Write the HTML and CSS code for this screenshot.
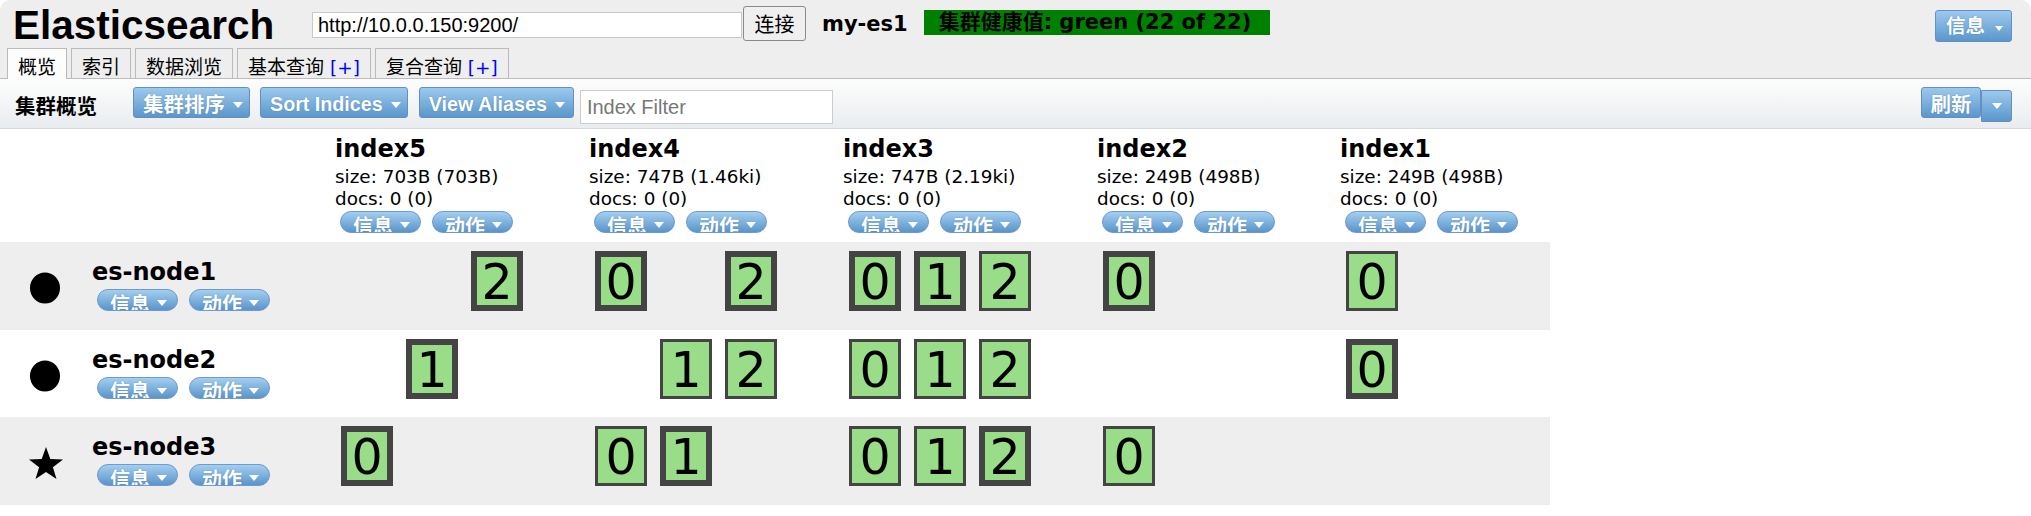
FILE: index.html
```html
<!DOCTYPE html>
<html lang="zh-CN">
<head>
<meta charset="utf-8">
<title>Elasticsearch</title>
<link rel="stylesheet" href="styles.css">
</head>
<body>
<div class="app">
  <header class="header">
    <div class="header-top">
      <h1 class="logo">Elasticsearch</h1>
      <input class="url" type="text" value="http://10.0.0.150:9200/">
      <button class="connect" type="button">连接</button>
      <span class="cluster-name">my-es1</span>
      <span class="health">集群健康值: green (22 of 22)</span>
      <button class="btn btn-info" type="button"><span class="btn-label">信息</span><span class="caret caret-sm"></span></button>
    </div>
    <nav class="tabs">
      <div class="tab active">概览</div>
      <div class="tab">索引</div>
      <div class="tab">数据浏览</div>
      <div class="tab">基本查询<span class="plus"> [+]</span></div>
      <div class="tab">复合查询<span class="plus"> [+]</span></div>
    </nav>
  </header>

  <div class="toolbar">
    <span class="toolbar-title">集群概览</span>
    <button class="btn btn-menu sort-cluster" type="button"><span class="btn-label">集群排序</span><span class="caret"></span></button>
    <button class="btn btn-menu" type="button"><span class="btn-label">Sort Indices</span><span class="caret"></span></button>
    <button class="btn btn-menu" type="button"><span class="btn-label">View Aliases</span><span class="caret"></span></button>
    <input class="filter" type="text" placeholder="Index Filter">
    <div class="split">
      <button class="btn btn-refresh" type="button">刷新</button>
      <button class="btn btn-drop" type="button"><span class="caret caret-drop"></span></button>
    </div>
  </div>

  <table class="cluster">
    <colgroup>
      <col class="col-node">
      <col class="col-idx">
      <col class="col-idx">
      <col class="col-idx">
      <col class="col-idx-s">
      <col class="col-last">
    </colgroup>
    <thead>
      <tr class="idx-row">
        <th></th>
        <th><div class="idx-head">
          <div class="idx-name">index5</div>
          <div class="idx-stat">size: 703B (703B)</div>
          <div class="idx-stat">docs: 0 (0)</div>
          <div class="pills"><span class="pill"><span>信息</span><span class="caret caret-pill"></span></span><span class="pill"><span>动作</span><span class="caret caret-pill"></span></span></div>
        </div></th>
        <th><div class="idx-head">
          <div class="idx-name">index4</div>
          <div class="idx-stat">size: 747B (1.46ki)</div>
          <div class="idx-stat">docs: 0 (0)</div>
          <div class="pills"><span class="pill"><span>信息</span><span class="caret caret-pill"></span></span><span class="pill"><span>动作</span><span class="caret caret-pill"></span></span></div>
        </div></th>
        <th><div class="idx-head">
          <div class="idx-name">index3</div>
          <div class="idx-stat">size: 747B (2.19ki)</div>
          <div class="idx-stat">docs: 0 (0)</div>
          <div class="pills"><span class="pill"><span>信息</span><span class="caret caret-pill"></span></span><span class="pill"><span>动作</span><span class="caret caret-pill"></span></span></div>
        </div></th>
        <th><div class="idx-head">
          <div class="idx-name">index2</div>
          <div class="idx-stat">size: 249B (498B)</div>
          <div class="idx-stat">docs: 0 (0)</div>
          <div class="pills"><span class="pill"><span>信息</span><span class="caret caret-pill"></span></span><span class="pill"><span>动作</span><span class="caret caret-pill"></span></span></div>
        </div></th>
        <th><div class="idx-head">
          <div class="idx-name">index1</div>
          <div class="idx-stat">size: 249B (498B)</div>
          <div class="idx-stat">docs: 0 (0)</div>
          <div class="pills"><span class="pill"><span>信息</span><span class="caret caret-pill"></span></span><span class="pill"><span>动作</span><span class="caret caret-pill"></span></span></div>
        </div></th>
      </tr>
    </thead>
    <tbody>
      <tr class="node-row shade">
        <td><div class="node">
          <svg class="node-icon" viewBox="0 0 34 32"><ellipse cx="16" cy="16" rx="15" ry="15.5" fill="#000"/></svg>
          <div class="node-info">
            <div class="node-name">es-node1</div>
            <div class="pills"><span class="pill"><span>信息</span><span class="caret caret-pill"></span></span><span class="pill"><span>动作</span><span class="caret caret-pill"></span></span></div>
          </div>
        </div></td>
        <td><div class="shards"><div class="shard empty"></div><div class="shard empty"></div><div class="shard primary">2</div></div></td>
        <td><div class="shards"><div class="shard primary">0</div><div class="shard empty"></div><div class="shard primary">2</div></div></td>
        <td><div class="shards"><div class="shard primary">0</div><div class="shard primary">1</div><div class="shard">2</div></div></td>
        <td><div class="shards"><div class="shard primary">0</div></div></td>
        <td><div class="shards"><div class="shard">0</div></div></td>
      </tr>
      <tr class="node-row">
        <td><div class="node">
          <svg class="node-icon" viewBox="0 0 34 32"><ellipse cx="16" cy="16" rx="15" ry="15.5" fill="#000"/></svg>
          <div class="node-info">
            <div class="node-name">es-node2</div>
            <div class="pills"><span class="pill"><span>信息</span><span class="caret caret-pill"></span></span><span class="pill"><span>动作</span><span class="caret caret-pill"></span></span></div>
          </div>
        </div></td>
        <td><div class="shards"><div class="shard empty"></div><div class="shard primary">1</div></div></td>
        <td><div class="shards"><div class="shard empty"></div><div class="shard">1</div><div class="shard">2</div></div></td>
        <td><div class="shards"><div class="shard">0</div><div class="shard">1</div><div class="shard">2</div></div></td>
        <td><div class="shards"></div></td>
        <td><div class="shards"><div class="shard primary">0</div></div></td>
      </tr>
      <tr class="node-row shade">
        <td><div class="node">
          <svg class="node-icon" viewBox="0 0 34 32"><polygon fill="#000" points="17,0 21.3,12 34,12.4 23.9,20.2 27.5,32 17,25 6.5,32 10.1,20.2 0,12.4 12.7,12"/></svg>
          <div class="node-info">
            <div class="node-name">es-node3</div>
            <div class="pills"><span class="pill"><span>信息</span><span class="caret caret-pill"></span></span><span class="pill"><span>动作</span><span class="caret caret-pill"></span></span></div>
          </div>
        </div></td>
        <td><div class="shards"><div class="shard primary">0</div></div></td>
        <td><div class="shards"><div class="shard">0</div><div class="shard primary">1</div></div></td>
        <td><div class="shards"><div class="shard">0</div><div class="shard">1</div><div class="shard primary">2</div></div></td>
        <td><div class="shards"><div class="shard">0</div></div></td>
        <td><div class="shards"></div></td>
      </tr>
    </tbody>
  </table>
</div>
</body>
</html>
```

FILE: styles.css
```css
* { box-sizing: border-box; }
html, body { margin: 0; padding: 0; }
body {
  background: #fff;
  color: #000;
  font-family: "DejaVu Sans", "Noto Sans CJK SC", sans-serif;
  width: 2031px;
  overflow: hidden;
}
button, input { font: inherit; color: inherit; margin: 0; }

/* ---------- header ---------- */
.header {
  height: 79px;
  background: #eeeeee;
  border-bottom: 1px solid #bcbcbc;
  border-radius: 10px 10px 0 0;
}
.header-top {
  display: flex;
  align-items: flex-start;
  height: 48px;
  padding: 0 19px 0 13px;
}
.logo {
  flex: none;
  width: 299px;
  margin: 3px 0 0;
  font: bold 40.5px/44px "Liberation Sans", sans-serif;
}
.url {
  flex: none;
  width: 430px;
  height: 26px;
  margin-top: 12px;
  padding: 0 5px;
  border: 1px solid #c8c8c8;
  background: #fff;
  font: 20px/24px "Liberation Sans", sans-serif;
  outline: none;
}
.connect {
  flex: none;
  width: 63px;
  height: 35px;
  margin: 6px 0 0 1px;
  padding: 0;
  border: 1px solid #8a8a8a;
  border-radius: 3px;
  background: #efefef;
  font: 20px/33px "Noto Sans CJK SC", sans-serif;
}
.cluster-name {
  flex: none;
  margin: 12px 0 0 16px;
  font-weight: bold;
  font-size: 21px;
  line-height: 24px;
  white-space: nowrap;
}
.health {
  flex: none;
  width: 346px;
  height: 25px;
  margin: 10px 0 0 16px;
  padding-left: 15px;
  background: #008000;
  font-weight: bold;
  font-size: 21px;
  line-height: 25px;
  white-space: nowrap;
  overflow: hidden;
}

/* ---------- tabs ---------- */
.tabs {
  display: flex;
  gap: 4px;
  height: 30px;
  padding-left: 7px;
}
.tab {
  height: 30px;
  padding: 4px 10px 0;
  border: 1px solid #bbbbbb;
  border-bottom: none;
  background: #eeeeee;
  font: 19px/26px "Noto Sans CJK SC", sans-serif;
  white-space: nowrap;
}
.tab.active {
  height: 31px;
  background: #fdfdfd;
}
.plus {
  font-family: "DejaVu Sans", sans-serif;
  font-size: 18.5px;
  color: #0000ff;
}

/* ---------- blue buttons ---------- */
.btn {
  display: inline-flex;
  align-items: flex-start;
  flex: none;
  height: 31px;
  padding: 4px 6px 0 9px;
  border: 1px solid #668dc6;
  border-radius: 3px;
  background: linear-gradient(#9cc9ed, #5a97cb);
  color: #fff;
  font: bold 19.7px/25px "Liberation Sans", "Noto Sans CJK SC", sans-serif;
  text-shadow: 0 0 1px rgba(30, 70, 130, 0.55);
  white-space: nowrap;
  cursor: pointer;
}
.caret {
  flex: none;
  width: 0;
  height: 0;
  border-left: 5px solid transparent;
  border-right: 5px solid transparent;
  border-top: 6px solid #fff;
  margin: 9.5px 0 0 8px;
}
.btn-info {
  margin: 10px 0 0 auto;
  width: 77px;
  height: 32px;
  padding: 3px 0 0 10px;
  font-size: 19.5px;
}
.caret-sm {
  border-left-width: 4.5px;
  border-right-width: 4.5px;
  border-top-width: 5px;
  margin: 12px 0 0 10px;
}

/* ---------- toolbar ---------- */
.toolbar {
  display: flex;
  align-items: flex-start;
  height: 50px;
  padding: 0 19px 0 15px;
  background: linear-gradient(#fdfdfd, #e9ecef);
  border-bottom: 1px solid #d5dadc;
}
.toolbar-title {
  flex: none;
  margin-top: 14px;
  font: bold 20.5px/24px "Noto Sans CJK SC", sans-serif;
}
.btn-menu { margin-top: 8px; }
.sort-cluster { margin-left: 36px; font-size: 20.5px; }
.btn-menu + .btn-menu { margin-left: 10px; }
.btn-menu + .btn-menu + .btn-menu { margin-left: 11px; padding-right: 8px; }
.filter {
  flex: none;
  width: 253px;
  height: 34px;
  margin: 11px 0 0 6px;
  padding: 0 6px;
  border: 1px solid #cccccc;
  background: #fff;
  font: 20px/30px "Liberation Sans", sans-serif;
  outline: none;
}
.filter::placeholder { color: #777777; }
.split {
  display: flex;
  align-items: flex-start;
  margin-left: auto;
}
.btn-refresh {
  margin-top: 8px;
  width: 60px;
  padding: 4px 0 0;
  justify-content: center;
  font-size: 20.5px;
}
.btn-drop {
  margin-top: 11px;
  width: 31px;
  height: 32px;
  padding: 0;
  justify-content: center;
  border-radius: 0 3px 3px 0;
}
.caret-drop {
  border-left-width: 5.5px;
  border-right-width: 5.5px;
  margin: 12px 0 0 0;
}

/* ---------- cluster overview table ---------- */
.cluster {
  width: 1550px;
  table-layout: fixed;
  border-collapse: collapse;
  border-spacing: 0;
}
.col-node { width: 335px; }
.col-idx { width: 254px; }
.col-idx-s { width: 243px; }
.col-last { width: 210px; }
.cluster th,
.cluster td {
  padding: 0;
  vertical-align: top;
  text-align: left;
  font-weight: normal;
}
.idx-row th { height: 113px; }
.idx-head { padding-top: 4px; }
.idx-name {
  font-weight: bold;
  font-size: 24px;
  line-height: 33px;
  white-space: nowrap;
}
.idx-stat {
  font-size: 18.4px;
  line-height: 22px;
  white-space: nowrap;
}
.pills {
  display: flex;
  gap: 11px;
  margin-top: 1px;
  padding-left: 5px;
}
.pill {
  display: flex;
  align-items: flex-start;
  flex: none;
  height: 22px;
  padding: 2.5px 10px 0 12px;
  border: 1px solid #6d9ad0;
  border-radius: 11px;
  background: linear-gradient(#a3cff0, #5a94ca);
  color: #fff;
  font: bold 20px/22px "Noto Sans CJK SC", sans-serif;
  text-shadow: 0 0 1px rgba(30, 70, 130, 0.5);
  overflow: hidden;
  white-space: nowrap;
}
.caret-pill {
  border-left-width: 5.5px;
  border-right-width: 5.5px;
  border-top-width: 6px;
  margin: 7.5px 0 0 7px;
}

.node-row td { height: 87.5px; }
.node-row.shade td { background: #eeeeee; }
.node {
  display: flex;
  align-items: flex-start;
}
.node-icon {
  flex: none;
  width: 34px;
  height: 32px;
  margin: 30px 0 0 29px;
}
.node-info {
  margin-left: 29px;
  padding-top: 16px;
}
.node-name {
  font-weight: bold;
  font-size: 24px;
  line-height: 28px;
  white-space: nowrap;
}
.node-info .pills { margin-top: 3px; }

.shards {
  display: flex;
  gap: 13px;
  padding: 9px 0 0 6px;
}
.shard {
  flex: none;
  display: flex;
  align-items: center;
  justify-content: center;
  width: 52px;
  height: 60px;
  padding-top: 3px;
  border: 3px solid #444444;
  background: #99dd88;
  font: 49px/1 "DejaVu Sans", sans-serif;
}
.shard.primary { border-width: 6px; }
.shard.empty { visibility: hidden; }
```
